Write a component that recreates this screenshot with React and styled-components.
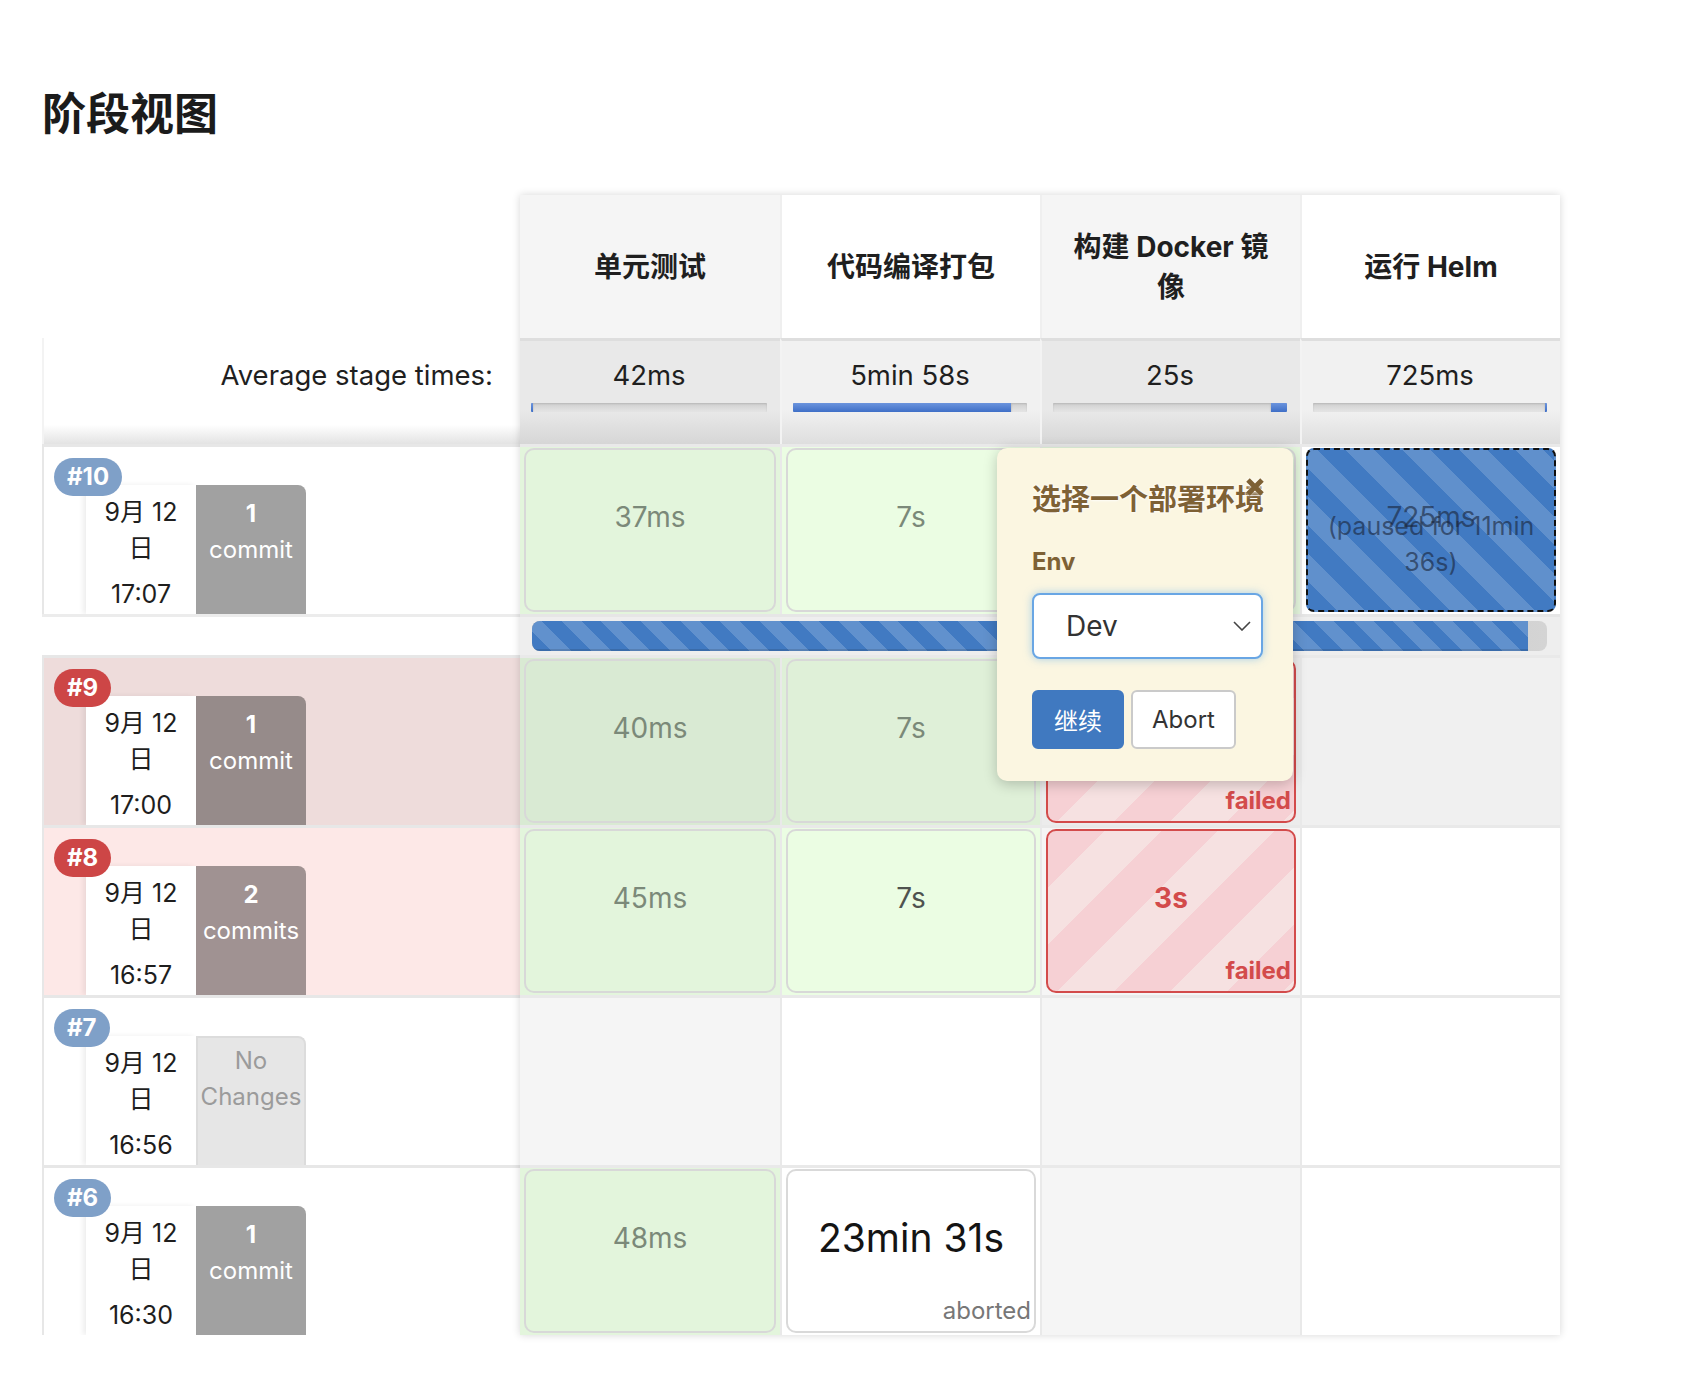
import React from 'react';
import styled, { createGlobalStyle, css } from 'styled-components';

const ROWS = '143px 106px 170px 41px 170px 170px 170px 170px';

const GlobalStyle = createGlobalStyle`
  * { box-sizing: border-box; }
  html, body { margin: 0; background: #fff; }
  body {
    font-family: Inter, "Noto Sans CJK SC", "Noto Sans", sans-serif;
    color: #222;
  }
`;

const Page = styled.main`
  padding: 88px 0 60px 42px;
`;

const Title = styled.h2`
  margin: 0 0 54px;
  font-size: 44px;
  line-height: 53px;
  font-weight: 700;
  color: #1b1b1b;
`;

const Board = styled.div`
  display: flex;
  align-items: flex-start;
`;

/* left column: build info */

const Side = styled.div`
  width: 478px;
  display: grid;
  grid-template-rows: ${ROWS};
`;

const SideAvg = styled.div`
  border-left: 2px solid #f3f3f3;
  background: linear-gradient(to bottom, #fff 82%, #e3e3e3 100%);
  padding: 19px 27px 0 0;
  text-align: right;
  font-size: 27.5px;
  line-height: 36px;
  color: #1f1f1f;
`;

const SideGap = styled.div`
  border-top: 3px solid #ececec;
  background: #fff;
`;

const BuildCell = styled.div`
  position: relative;
  display: flex;
  padding: 38px 0 0 42px;
  border-top: 3px solid #e7e7e7;
  border-left: 2px solid #e7e7e7;
  background: ${(p) => p.$bg};
  overflow: hidden;
`;

const Badge = styled.span`
  position: absolute;
  top: 11px;
  left: 10px;
  z-index: 1;
  height: 38px;
  padding: 0 13px;
  border-radius: 19px;
  background: ${(p) => (p.$tone === 'red' ? '#cd4646' : '#7fa0c8')};
  color: #fff;
  font-size: 24px;
  font-weight: 700;
  line-height: 38px;
`;

const DateBox = styled.div`
  width: 110px;
  padding-top: 9px;
  background: #fff;
  box-shadow: -3px 0 5px rgba(0, 0, 0, 0.07);
  text-align: center;
  font-size: 25px;
  line-height: 36px;
  color: #1e1e1e;
`;

const Time = styled.div`
  margin-top: 10px;
`;

const Changes = styled.div`
  width: 110px;
  padding-top: ${(p) => (p.$none ? '5px' : '11px')};
  border-top-right-radius: 8px;
  background: ${(p) => (p.$none ? '#e6e6e6' : 'rgba(0, 0, 0, 0.37)')};
  border: ${(p) => (p.$none ? '2px solid #dcdcdc' : '0')};
  border-bottom: 0;
  color: ${(p) => (p.$none ? '#9b9b9b' : '#fff')};
  text-align: center;
  font-size: 24px;
  line-height: 36px;
  white-space: nowrap;
`;

const Count = styled.div`
  font-weight: 700;
`;

/* right: stage table */

const StageTable = styled.div`
  position: relative;
  display: grid;
  grid-template-columns: repeat(4, 260px);
  grid-template-rows: ${ROWS};
  box-shadow: 0 0 8px rgba(0, 0, 0, 0.16);
`;

const StageHead = styled.div`
  display: flex;
  align-items: center;
  justify-content: center;
  padding: 0 22px;
  border-left: ${(p) => (p.$first ? '0' : '2px solid #efefef')};
  background: ${(p) => (p.$shade ? '#f5f5f5' : '#fff')};
  text-align: center;
  font-size: 28px;
  font-weight: 700;
  line-height: 40px;
  color: #1f1f1f;
`;

const AvgCell = styled.div`
  display: flex;
  flex-direction: column;
  padding: 16px 13px 0 11px;
  border-top: 3px solid #dedede;
  border-left: ${(p) => (p.$first ? '0' : '2px solid #f3f3f3')};
  background: ${(p) =>
    p.$shade
      ? 'linear-gradient(to bottom, #e9e9e9 68%, #d6d6d6 100%)'
      : 'linear-gradient(to bottom, #f1f1f1 68%, #dedede 100%)'};
  background-origin: border-box;
  text-align: center;
  font-size: 27.5px;
  line-height: 36px;
  color: #1f1f1f;
`;

const AvgBar = styled.div`
  display: flex;
  height: 9px;
  margin-top: 10px;
  background: linear-gradient(to bottom, #cfcfcf, #e5e5e5);
  box-shadow: inset 0 1px 2px rgba(0, 0, 0, 0.12);
  border-radius: 1px;
  overflow: hidden;
`;

const AvgFill = styled.div`
  min-width: 2px;
  background: linear-gradient(to bottom, #6b94dd, #3f6fc7);
  box-shadow: 0 1px 2px rgba(0, 0, 0, 0.2);
`;

const Cell = styled.div`
  display: flex;
  padding: 1px 4px 2px;
  border-top: 3px solid #e9e9e9;
  border-left: ${(p) => (p.$first ? '0' : '2px solid #e9e9e9')};
  background: ${(p) => p.$bg};
`;

const kinds = {
  success: css`
    border: 2px solid #d8d8d8;
    color: #7b8979;
  `,
  strong: css`
    border: 2px solid #d8d8d8;
    color: #4f524f;
  `,
  failed: css`
    border: 2px solid #d34b4b;
    background: repeating-linear-gradient(135deg, #f6d0d4 0 40px, #f6e1e1 40px 80px);
    color: #d34b4b;
    font-weight: 700;
  `,
  paused: css`
    border: 2px dashed #111;
    border-radius: 8px;
    background: repeating-linear-gradient(45deg, #417ac2 0 20px, #6090cc 20px 40px);
    color: rgba(25, 35, 55, 0.6);
  `,
  aborted: css`
    border: 2px solid #d9d9d9;
    background: #fff;
    color: #141414;
    font-size: 39px;
  `,
};

const Box = styled.div`
  flex: 1;
  position: relative;
  display: flex;
  flex-direction: column;
  align-items: center;
  padding-top: 49px;
  border-radius: 10px;
  background: ${(p) => p.$bg};
  font-size: 28px;
  line-height: 36px;
  ${(p) => kinds[p.$kind]}
`;

const PausedNote = styled.div`
  position: absolute;
  top: 58px;
  left: 0;
  right: 0;
  padding: 0 8px;
  text-align: center;
  font-size: 25px;
  line-height: 36px;
  font-weight: 400;
`;

const Status = styled.div`
  margin-top: auto;
  align-self: flex-end;
  padding: 0 3px 2px 0;
  font-size: 24px;
  line-height: 36px;
  font-weight: ${(p) => (p.$failed ? 700 : 400)};
  color: ${(p) => (p.$failed ? '#d34b4b' : '#777')};
`;

const ProgressCell = styled.div`
  grid-column: 1 / -1;
  display: flex;
  align-items: center;
  padding: 0 13px 0 12px;
  border-top: 3px solid #e6e6e6;
  background: #eee;
`;

const Track = styled.div`
  flex: 1;
  display: flex;
  height: 30px;
  border-radius: 8px;
  overflow: hidden;
  background: linear-gradient(to right, #a8a8a8, #d4d4d4);
`;

const TrackFill = styled.div`
  background: repeating-linear-gradient(45deg, #417ac2 0 14px, #6191cd 14px 28px);
  box-shadow: inset 0 -2px 0 rgba(0, 0, 0, 0.12);
`;

/* input popover */

const Popover = styled.div`
  position: absolute;
  left: 477px;
  top: 253px;
  z-index: 5;
  width: 296px;
  height: 333px;
  padding: 34px 30px 0 35px;
  border-radius: 10px;
  background: #fbf6e1;
  box-shadow: 0 3px 14px rgba(0, 0, 0, 0.22);
  color: #7e6135;
`;

const PopTitle = styled.div`
  font-size: 29px;
  font-weight: 700;
  line-height: 36px;
  text-shadow: 0 0 3px #fff, 0 0 3px #fff;
  white-space: nowrap;
`;

const Close = styled.svg`
  position: absolute;
  top: 29px;
  right: 28px;
  filter: drop-shadow(0 0 2px #fff);
`;

const FieldLabel = styled.div`
  margin-top: 26px;
  font-size: 24px;
  font-weight: 700;
  line-height: 36px;
`;

const Select = styled.div`
  display: flex;
  align-items: center;
  justify-content: space-between;
  width: 231px;
  height: 66px;
  margin-top: 13px;
  padding: 0 10px 0 32px;
  border: 2px solid #69a6e4;
  border-radius: 8px;
  background: #fff;
  box-shadow: 0 0 8px rgba(102, 175, 233, 0.55);
  font-size: 28px;
  color: #333;
`;

const Actions = styled.div`
  display: flex;
  gap: 7px;
  margin-top: 31px;
`;

const Button = styled.button`
  height: 59px;
  padding: 0 ${(p) => (p.$primary ? '20px' : '19px')};
  border-radius: 6px;
  border: 2px solid ${(p) => (p.$primary ? '#4079c0' : '#cacaca')};
  background: ${(p) => (p.$primary ? '#4079c0' : '#fff')};
  color: ${(p) => (p.$primary ? '#fff' : '#333')};
  font-family: inherit;
  font-size: 24px;
`;

const stages = ['单元测试', '代码编译打包', '构建 Docker 镜像', '运行 Helm'];

const averages = [
  { text: '42ms', from: 0, width: 1 },
  { text: '5min 58s', from: 0, width: 93 },
  { text: '25s', from: 93, width: 7 },
  { text: '725ms', from: 99, width: 1 },
];

const builds = [
  {
    id: 10, tone: 'blue', bg: '#fff', time: '17:07', count: '1', label: 'commit',
    stages: [
      { kind: 'success', text: '37ms' },
      { kind: 'success', text: '7s' },
      { kind: 'success', text: '25s' },
      { kind: 'paused', text: '725ms', note: '(paused for 11min 36s)' },
    ],
  },
  {
    id: 9, tone: 'red', bg: '#eedcdb', dim: true, time: '17:00', count: '1', label: 'commit',
    stages: [
      { kind: 'success', text: '40ms' },
      { kind: 'success', text: '7s' },
      { kind: 'failed', text: '3s', status: 'failed' },
      { kind: 'empty' },
    ],
  },
  {
    id: 8, tone: 'red', bg: '#fde8e7', time: '16:57', count: '2', label: 'commits',
    stages: [
      { kind: 'success', text: '45ms' },
      { kind: 'strong', text: '7s' },
      { kind: 'failed', text: '3s', status: 'failed' },
      { kind: 'empty' },
    ],
  },
  {
    id: 7, tone: 'blue', bg: '#fff', time: '16:56', none: true,
    stages: [{ kind: 'empty' }, { kind: 'empty' }, { kind: 'empty' }, { kind: 'empty' }],
  },
  {
    id: 6, tone: 'blue', bg: '#fff', time: '16:30', count: '1', label: 'commit',
    stages: [
      { kind: 'success', text: '48ms' },
      { kind: 'aborted', text: '23min 31s', status: 'aborted' },
      { kind: 'empty' },
      { kind: 'empty' },
    ],
  },
];

function cellBg(kind, col, dim) {
  const shade = col % 2 === 0;
  if (kind === 'success' || kind === 'strong') {
    if (dim) return shade ? '#d9ead3' : '#dff0d8';
    return shade ? '#e3f5dc' : '#ebfde3';
  }
  if (dim) return shade ? '#ececec' : '#f0f0f0';
  return shade ? '#f5f5f5' : '#fff';
}

function BuildInfo({ build }) {
  return (
    <BuildCell $bg={build.bg}>
      <Badge $tone={build.tone}>#{build.id}</Badge>
      <DateBox>
        <div>9月 12</div>
        <div>日</div>
        <Time>{build.time}</Time>
      </DateBox>
      {build.none ? (
        <Changes $none>
          <div>No</div>
          <div>Changes</div>
        </Changes>
      ) : (
        <Changes>
          <Count>{build.count}</Count>
          <div>{build.label}</div>
        </Changes>
      )}
    </BuildCell>
  );
}

function StageCells({ build }) {
  return build.stages.map((stage, i) => {
    const bg = cellBg(stage.kind, i, build.dim);
    return (
      <Cell key={`${build.id}-${i}`} $first={i === 0} $bg={bg}>
        {stage.kind !== 'empty' && (
          <Box $kind={stage.kind} $bg={bg}>
            <div>{stage.text}</div>
            {stage.note && <PausedNote>{stage.note}</PausedNote>}
            {stage.status && <Status $failed={stage.status === 'failed'}>{stage.status}</Status>}
          </Box>
        )}
      </Cell>
    );
  });
}

export default function App() {
  const [first, ...rest] = builds;

  return (
    <Page>
      <GlobalStyle />
      <Title>阶段视图</Title>

      <Board>
        <Side>
          <div />
          <SideAvg>Average stage times:</SideAvg>
          <BuildInfo build={first} />
          <SideGap />
          {rest.map((b) => (
            <BuildInfo key={b.id} build={b} />
          ))}
        </Side>

        <StageTable>
          {stages.map((name, i) => (
            <StageHead key={name} $first={i === 0} $shade={i % 2 === 0}>
              {name}
            </StageHead>
          ))}

          {averages.map((avg, i) => (
            <AvgCell key={avg.text} $first={i === 0} $shade={i % 2 === 0}>
              <div>{avg.text}</div>
              <AvgBar>
                <AvgFill style={{ marginLeft: `${avg.from}%`, width: `${avg.width}%` }} />
              </AvgBar>
            </AvgCell>
          ))}

          <StageCells build={first} />

          <ProgressCell>
            <Track>
              <TrackFill style={{ width: '98.1%' }} />
            </Track>
          </ProgressCell>

          {rest.map((b) => (
            <StageCells key={b.id} build={b} />
          ))}

          <Popover>
            <PopTitle>选择一个部署环境</PopTitle>
            <Close width="20" height="20" viewBox="0 0 20 20">
              <path d="M3 3 L17 17 M17 3 L3 17" stroke="#7e6135" strokeWidth="5" />
            </Close>
            <FieldLabel>Env</FieldLabel>
            <Select>
              <span>Dev</span>
              <svg width="18" height="10" viewBox="0 0 18 10">
                <path d="M1 1 L9 9 L17 1" fill="none" stroke="#444" strokeWidth="1.6" />
              </svg>
            </Select>
            <Actions>
              <Button $primary>继续</Button>
              <Button>Abort</Button>
            </Actions>
          </Popover>
        </StageTable>
      </Board>
    </Page>
  );
}
